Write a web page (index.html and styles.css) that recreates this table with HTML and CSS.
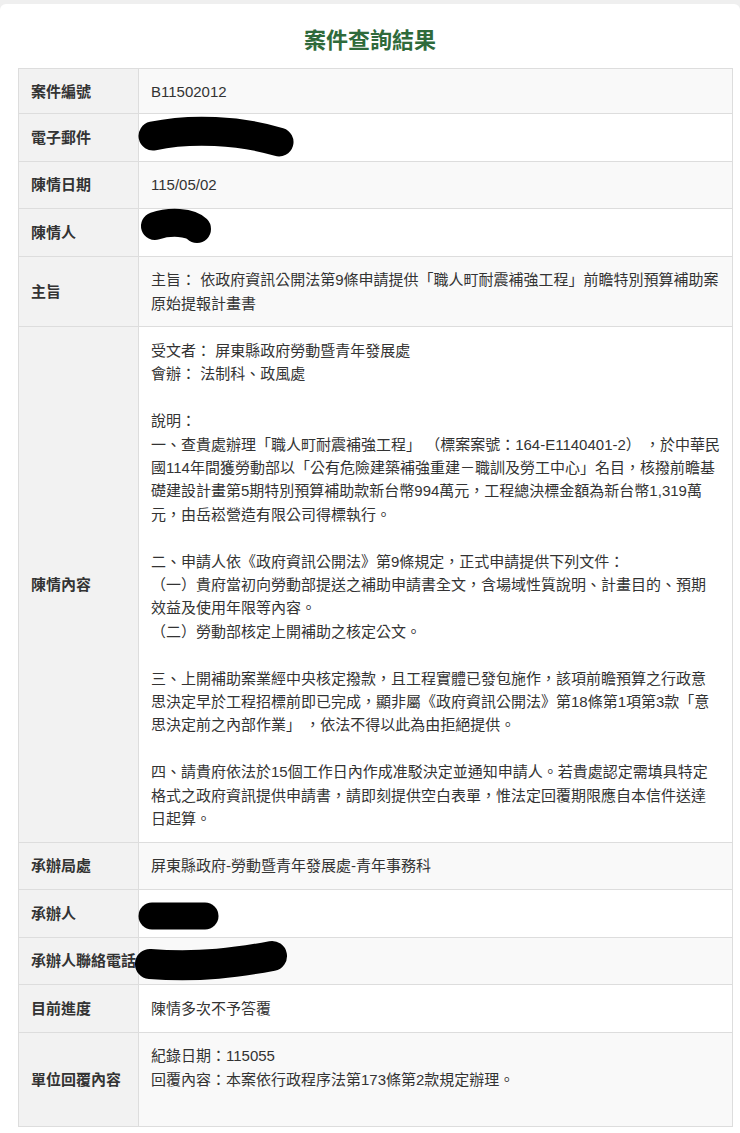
FILE: index.html
```
<!DOCTYPE html>
<html lang="zh-Hant">
<head>
<meta charset="utf-8">
<title>案件查詢結果</title>
<link rel="stylesheet" href="styles.css">
</head>
<body>
<div class="card">
  <h1 class="title">案件查詢結果</h1>
  <table class="result">
    <colgroup><col class="col-label"><col></colgroup>
    <tbody>
      <tr class="first"><th>案件編號</th><td>B11502012</td></tr>
      <tr><th>電子郵件</th><td>&nbsp;</td></tr>
      <tr><th>陳情日期</th><td>115/05/02</td></tr>
      <tr><th>陳情人</th><td>&nbsp;</td></tr>
      <tr><th>主旨</th><td>主旨： 依政府資訊公開法第9條申請提供「職人町耐震補強工程」前瞻特別預算補助案<br>原始提報計畫書</td></tr>
      <tr><th>陳情內容</th><td>受文者： 屏東縣政府勞動暨青年發展處<br>會辦： 法制科、政風處<br><br>說明：<br>一、查貴處辦理「職人町耐震補強工程」 （標案案號：164-E1140401-2） ，於中華民<br>國114年間獲勞動部以「公有危險建築補強重建－職訓及勞工中心」名目，核撥前瞻基<br>礎建設計畫第5期特別預算補助款新台幣994萬元，工程總決標金額為新台幣1,319萬<br>元，由岳崧營造有限公司得標執行。<br><br>二、申請人依《政府資訊公開法》第9條規定，正式申請提供下列文件：<br>（一）貴府當初向勞動部提送之補助申請書全文，含場域性質說明、計畫目的、預期<br>效益及使用年限等內容。<br>（二）勞動部核定上開補助之核定公文。<br><br>三、上開補助案業經中央核定撥款，且工程實體已發包施作，該項前瞻預算之行政意<br>思決定早於工程招標前即已完成，顯非屬《政府資訊公開法》第18條第1項第3款「意<br>思決定前之內部作業」 ，依法不得以此為由拒絕提供。<br><br>四、請貴府依法於15個工作日內作成准駁決定並通知申請人。若貴處認定需填具特定<br>格式之政府資訊提供申請書，請即刻提供空白表單，惟法定回覆期限應自本信件送達<br>日起算。</td></tr>
      <tr><th>承辦局處</th><td>屏東縣政府-勞動暨青年發展處-青年事務科</td></tr>
      <tr><th>承辦人</th><td>&nbsp;</td></tr>
      <tr><th>承辦人聯絡電話</th><td>&nbsp;</td></tr>
      <tr><th>目前進度</th><td>陳情多次不予答覆</td></tr>
      <tr><th>單位回覆內容</th><td>紀錄日期：115055<br>回覆內容：本案依行政程序法第173條第2款規定辦理。<br>&nbsp;</td></tr>
    </tbody>
  </table>
</div>
<svg class="redact" width="740" height="1133" viewBox="0 0 740 1133" aria-hidden="true">
  <g fill="none" stroke="#000" stroke-linecap="round" stroke-linejoin="round">
    <path d="M153,136 C190,128 240,130 279,142" stroke-width="29"/>
    <path d="M155,226 C170,221 190,222 197,229" stroke-width="28"/>
    <path d="M152,916 L205,916" stroke-width="27"/>
    <path d="M150,964 C200,968 240,962 272,956" stroke-width="30"/>
  </g>
</svg>
</body>
</html>
```
FILE: styles.css
```
html, body {
  margin: 0;
  padding: 0;
}
body {
  position: relative;
  background: #efefef;
  font-family: "Liberation Sans", "Noto Sans CJK TC", sans-serif;
  color: #333;
  overflow: hidden;
}
.card {
  margin-top: 4px;
  background: #fff;
  border-radius: 6px 6px 0 0;
  padding: 22px 0 20px;
  min-height: 1200px;
}
.title {
  margin: 0 0 12px;
  text-align: center;
  font-size: 22px;
  line-height: 30px;
  font-weight: 700;
  color: #2f6a3b;
}
.result {
  margin-left: 18px;
  width: 715px;
  border-collapse: collapse;
  table-layout: fixed;
  border: 1px solid #d9d9d9;
  font-size: 15px;
  line-height: 23.4px;
}
.col-label {
  width: 120px;
}
.result th,
.result td {
  border: 1px solid #dddddd;
  padding: 11.5px 12px;
  vertical-align: middle;
  text-align: left;
}
.result .first th,
.result .first td {
  padding-top: 10.5px;
  padding-bottom: 10.5px;
}
.result th {
  background: #f2f2f2;
  font-weight: 700;
  white-space: nowrap;
  overflow: visible;
}
.result td {
  background: #ffffff;
}
.result tr:nth-child(odd) td {
  background: #f9f9f9;
}
.redact {
  position: absolute;
  top: 0;
  left: 0;
  pointer-events: none;
}
```
